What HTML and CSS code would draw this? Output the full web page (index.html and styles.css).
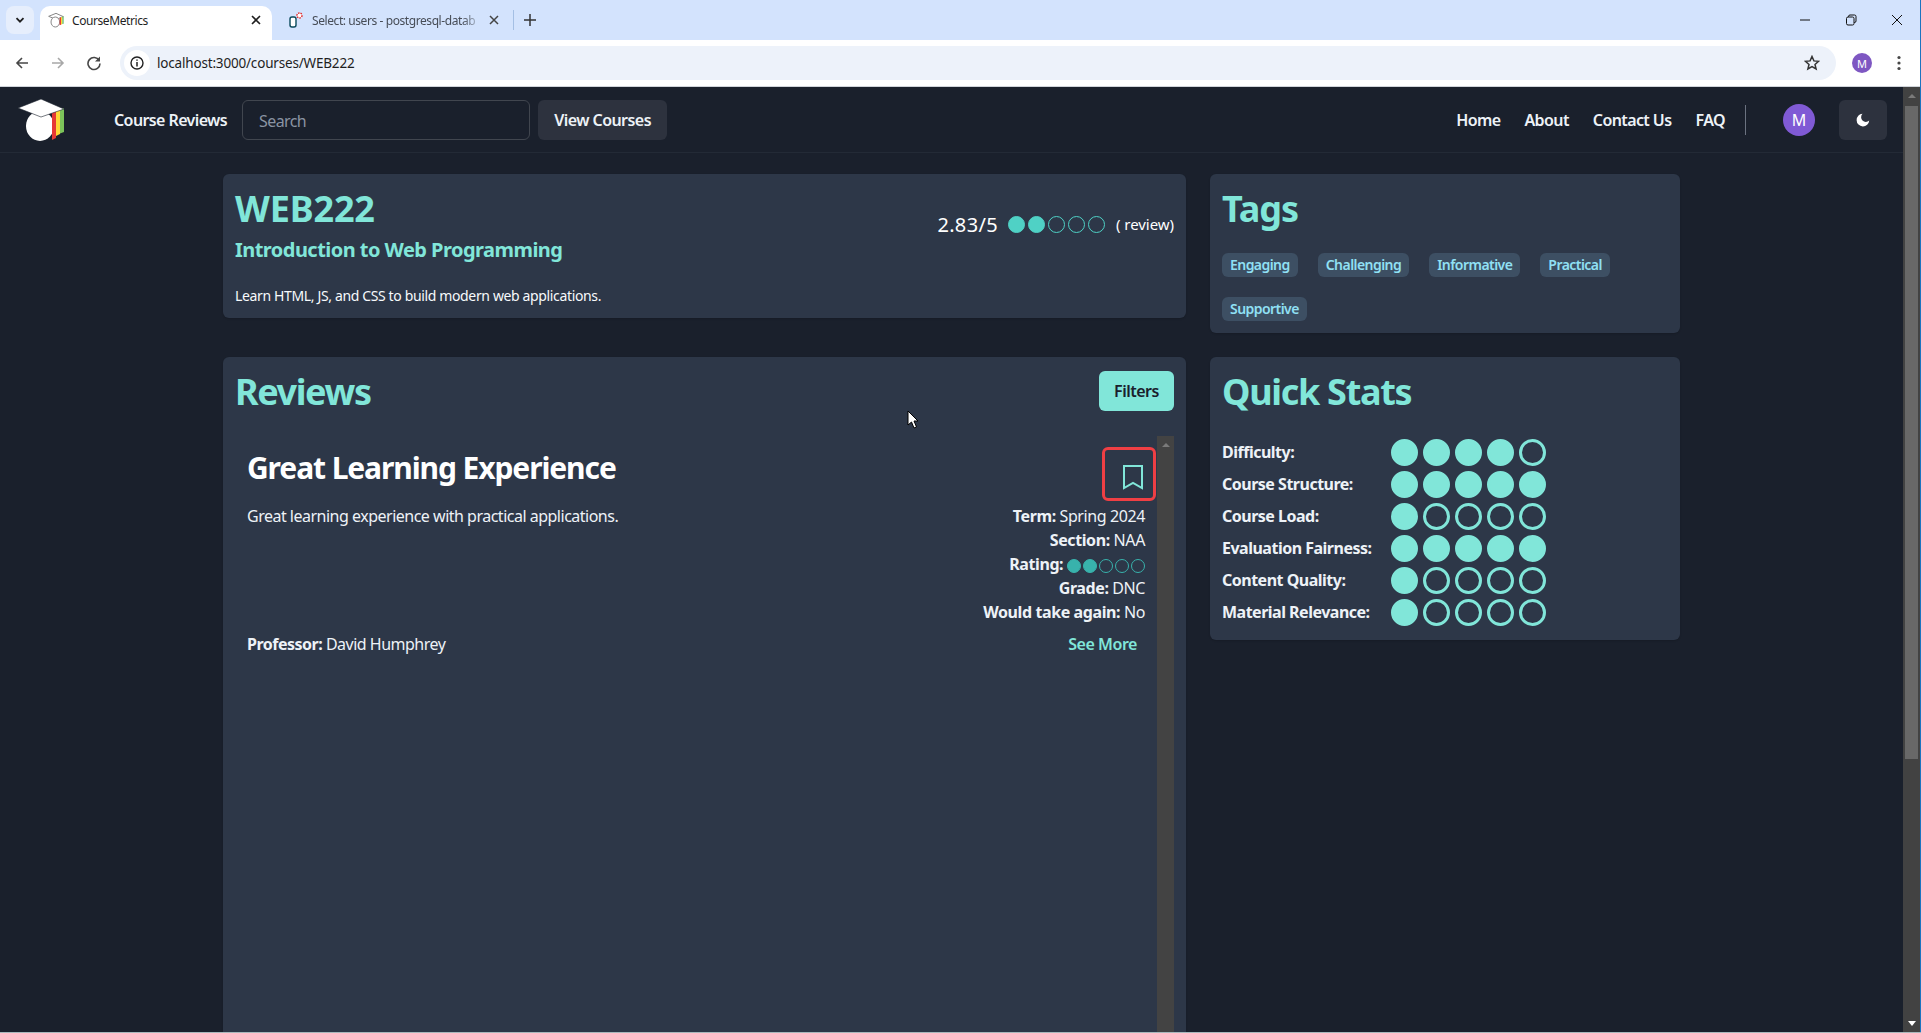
FILE: index.html
```html
<!DOCTYPE html>
<html lang="en">
<head>
<meta charset="utf-8">
<title>CourseMetrics</title>
<link rel="stylesheet" href="styles.css">
</head>
<body>
<div class="window">
  <div class="tabstrip">
    <div class="tabsearch"><svg width="12" height="12" viewBox="0 0 12 12"><path d="M2.5 4.2 6 7.7l3.5-3.5" fill="none" stroke="#1f1f1f" stroke-width="1.8"/></svg></div>
    <div class="tab active">
      <svg class="fav" width="16" height="16" viewBox="0 0 48 44"><path d="M2 11 24 2l22 10-22 8z" fill="#fff" stroke="#888" stroke-width="3"/><ellipse cx="22" cy="28" rx="13" ry="15" fill="#fff" stroke="#888" stroke-width="3"/><path d="M35 16l4-2v22l-4 2z" fill="#e53935"/><path d="M39 14l4-2v22l-4 2z" fill="#fdd835"/><path d="M43 12l4-1v22l-4 1z" fill="#66bb6a"/></svg>
      <span class="tabtitle">CourseMetrics</span>
      <svg class="tabclose" width="10" height="10" viewBox="0 0 10 10"><path d="M1 1l8 8M9 1l-8 8" stroke="#1f1f1f" stroke-width="1.6"/></svg>
    </div>
    <div class="tab inactive">
      <svg class="fav" width="16" height="16" viewBox="0 0 16 16"><rect x="2" y="5" width="6" height="10" rx="2" fill="#fff" stroke="#0b4a5c" stroke-width="1.4"/><circle cx="11.500" cy="3.500" r="2.500" fill="#fff" stroke="#e02020" stroke-width="1.400" stroke-dasharray="1.500 1"/></svg>
      <span class="tabtitle dim">Select: users - postgresql-datab</span>
      <svg class="tabclose" width="10" height="10" viewBox="0 0 10 10"><path d="M1 1l8 8M9 1l-8 8" stroke="#444" stroke-width="1.500"/></svg>
    </div>
    <div class="tabsep"></div>
    <svg class="newtab" width="12" height="12" viewBox="0 0 12 12"><path d="M6 0v12M0 6h12" stroke="#333" stroke-width="1.500"/></svg>
    <div class="winctrls">
      <svg width="12" height="12" viewBox="0 0 12 12"><path d="M1 6h10" stroke="#111" stroke-width="1"/></svg>
      <svg width="12" height="12" viewBox="0 0 12 12"><rect x="1.500" y="3" width="7.500" height="8" rx="1.500" fill="none" stroke="#111"/><path d="M3.500 3V2.500a1.500 1.500 0 0 1 1.500-1.500h4.500a1.500 1.500 0 0 1 1.500 1.500V7a1.500 1.500 0 0 1-1.500 1.500H9" fill="none" stroke="#111"/></svg>
      <svg width="12" height="12" viewBox="0 0 12 12"><path d="M1 1l10 10M11 1 1 11" stroke="#111" stroke-width="1"/></svg>
    </div>
  </div>
  <div class="toolbar">
    <svg class="tool" width="16" height="16" viewBox="0 0 16 16"><path d="M14 8H3M8 3 3 8l5 5" fill="none" stroke="#474747" stroke-width="1.600"/></svg>
    <svg class="tool" width="16" height="16" viewBox="0 0 16 16"><path d="M2 8h11M8 3l5 5-5 5" fill="none" stroke="#a8a8a8" stroke-width="1.600"/></svg>
    <svg class="tool" width="16" height="16" viewBox="0 0 16 16"><path d="M13.200 5.500A6 6 0 1 0 14 8.500" fill="none" stroke="#474747" stroke-width="1.600"/><path d="M14 1.500v5H9z" fill="#474747"/></svg>
    <div class="omnibox">
      <div class="siteinfo"><svg width="16" height="16" viewBox="0 0 16 16"><circle cx="8" cy="8" r="6" fill="none" stroke="#222" stroke-width="1.400"/><path d="M8 7v4.500M8 4.500v1.300" stroke="#222" stroke-width="1.500"/></svg></div>
      <span class="url">localhost:3000/courses/WEB222</span>
      <svg class="star" width="16" height="16" viewBox="0 0 16 16"><path d="M8 1.500l1.900 4.400 4.700.4-3.600 3.100 1.100 4.600L8 11.600 3.900 14l1.100-4.600L1.400 6.300l4.700-.4z" fill="none" stroke="#333" stroke-width="1.500"/></svg>
    </div>
    <div class="chromeavatar">M</div>
    <svg class="kebab" width="4" height="16" viewBox="0 0 4 16"><circle cx="2" cy="2.500" r="1.600" fill="#474747"/><circle cx="2" cy="8" r="1.600" fill="#474747"/><circle cx="2" cy="13.500" r="1.600" fill="#474747"/></svg>
  </div>
  <div class="viewport">
    <div class="page">
      <nav class="navbar">
        <svg class="logo" width="48" height="44" viewBox="0 0 48 44">
          <ellipse cx="22" cy="28" rx="14" ry="15" fill="#fff"/>
          <path d="M34 15l4-2v27l-4 2z" fill="#e53935"/>
          <path d="M38 13l4-2v25l-4 2z" fill="#fdd835"/>
          <path d="M42 11l4-1v24l-4 1.500z" fill="#7cc35a"/>
          <path d="M0 10 23 1l23 10-23 8z" fill="#fff" stroke="#1a202c" stroke-width=".6"/>
        </svg>
        <a class="brand">Course Reviews</a>
        <div class="search">Search</div>
        <div class="btn viewcourses">View Courses</div>
        <div class="navlinks">
          <a class="navlink">Home</a>
          <a class="navlink">About</a>
          <a class="navlink">Contact Us</a>
          <a class="navlink">FAQ</a>
        </div>
        <div class="navdivider"></div>
        <div class="avatar">M</div>
        <div class="btn moon"><svg width="14" height="14" viewBox="0 0 14 14"><path d="M6.500 .8A6.300 6.300 0 1 0 13.200 7.500 4.400 4.400 0 0 1 6.500 .8z" fill="#fff"/></svg></div>
      </nav>
      <main class="content">
        <section class="card header">
          <div class="headertext">
            <h1 class="heading course">WEB222</h1>
            <h2 class="subtitle">Introduction to Web Programming</h2>
            <p class="desc">Learn HTML, JS, and CSS to build modern web applications.</p>
          </div>
          <div class="overall">
            <span class="score">2.83/5</span>
            <span class="dots small"><i class="dot on"></i><i class="dot on"></i><i class="dot"></i><i class="dot"></i><i class="dot"></i></span>
            <span class="count">( review)</span>
          </div>
        </section>
        <section class="card tagscard">
          <h2 class="heading">Tags</h2>
          <div class="tags">
            <span class="tag">Engaging</span>
            <span class="tag">Challenging</span>
            <span class="tag">Informative</span>
            <span class="tag">Practical</span>
            <span class="tag">Supportive</span>
          </div>
        </section>
        <section class="card reviews">
          <div class="reviewshead">
            <h2 class="heading reviewsheading">Reviews</h2>
            <div class="btn filters">Filters</div>
          </div>
          <div class="listwrap">
            <div class="list">
              <article class="review">
                <div class="reviewleft">
                  <h3 class="reviewtitle">Great Learning Experience</h3>
                  <p class="reviewbody">Great learning experience with practical applications.</p>
                  <p class="prof"><b>Professor:</b> David Humphrey</p>
                </div>
                <div class="reviewright">
                  <div class="bookmark"><svg width="22" height="26" viewBox="0 0 22 26"><path d="M2 2h18v22l-9-5-9 5z" fill="none" stroke="#81e6d9" stroke-width="2"/></svg></div>
                  <p class="meta"><b>Term:</b> Spring 2024</p>
                  <p class="meta"><b>Section:</b> NAA</p>
                  <p class="meta"><b>Rating:</b> <span class="dots tiny"><i class="dot on"></i><i class="dot on"></i><i class="dot"></i><i class="dot"></i><i class="dot"></i></span></p>
                  <p class="meta"><b>Grade:</b> DNC</p>
                  <p class="meta"><b>Would take again:</b> No</p>
                  <a class="seemore">See More</a>
                </div>
              </article>
            </div>
            <div class="innerscroll"><span class="arrowup"></span></div>
          </div>
        </section>
        <section class="card stats">
          <h2 class="heading statsheading">Quick Stats</h2>
          <div class="statrows">
            <div class="stat"><b class="statlabel">Difficulty:</b><span class="dots big"><i class="dot on"></i><i class="dot on"></i><i class="dot on"></i><i class="dot on"></i><i class="dot"></i></span></div>
            <div class="stat"><b class="statlabel">Course Structure:</b><span class="dots big"><i class="dot on"></i><i class="dot on"></i><i class="dot on"></i><i class="dot on"></i><i class="dot on"></i></span></div>
            <div class="stat"><b class="statlabel">Course Load:</b><span class="dots big"><i class="dot on"></i><i class="dot"></i><i class="dot"></i><i class="dot"></i><i class="dot"></i></span></div>
            <div class="stat"><b class="statlabel">Evaluation Fairness:</b><span class="dots big"><i class="dot on"></i><i class="dot on"></i><i class="dot on"></i><i class="dot on"></i><i class="dot on"></i></span></div>
            <div class="stat"><b class="statlabel">Content Quality:</b><span class="dots big"><i class="dot on"></i><i class="dot"></i><i class="dot"></i><i class="dot"></i><i class="dot"></i></span></div>
            <div class="stat"><b class="statlabel">Material Relevance:</b><span class="dots big"><i class="dot on"></i><i class="dot"></i><i class="dot"></i><i class="dot"></i><i class="dot"></i></span></div>
          </div>
        </section>
      </main>
      <svg class="cursor" width="12" height="19" viewBox="0 0 12 19"><path d="M1 1v14l3.500-3 2.500 6 2.500-1-2.500-6H11z" fill="#fff" stroke="#000" stroke-width="1"/></svg>
    </div>
    <div class="pagescroll">
      <span class="arrowup light"></span>
      <div class="pagethumb"></div>
      <span class="arrowdown"></span>
    </div>
  </div>
</div>
</body>
</html>
```
FILE: styles.css
```css
* { box-sizing: border-box; }
html, body { margin: 0; height: 100%; overflow: hidden; }
body { background: #a9b8bc; font-family: "Noto Sans", "Open Sans", sans-serif; color: #fff; font-size: 16px; }
h1, h2, h3, p { margin: 0; }

.window { width: 1920px; height: 1032px; display: flex; flex-direction: column; background: #1a202c; box-shadow: 1px 0 0 #1b74c0; }

/* browser chrome */
.tabstrip { height: 40px; background: #d3e3fd; display: flex; align-items: flex-end; color: #1f1f1f; font-size: 12px; letter-spacing: -.42px; position: relative; }
.tabsearch { width: 28px; height: 28px; margin: 0 6px 6px 6px; border-radius: 8px; background: #e6eefc; display: flex; align-items: center; justify-content: center; }
.tab { height: 34px; display: flex; align-items: center; padding-bottom: 6px; }
.tab.active { width: 232px; background: #fff; border-radius: 10px 10px 0 0; padding-left: 8px; padding-right: 11px; }
.tab.inactive { width: 240px; padding-left: 16px; padding-right: 13px; }
.fav { flex: none; margin-right: 8px; }
.tabtitle { flex: 1; white-space: nowrap; overflow: hidden; }
.tabtitle.dim { color: #474d57; -webkit-mask-image: linear-gradient(to right, #000 88%, transparent); mask-image: linear-gradient(to right, #000 88%, transparent); }
.tabclose { flex: none; margin-left: 6px; }
.tabsep { width: 1px; height: 20px; background: #a4bfe4; margin: 0 0 10px 1px; }
.newtab { margin: 0 0 14px 10px; }
.winctrls { margin: 0 17px 14px auto; display: flex; gap: 34px; }

.toolbar { height: 47px; background: #fff; border-bottom: 1px solid #d0d4da; display: flex; align-items: center; padding: 0 0 0 14px; }
.tool { flex: none; margin-right: 20px; }
.omnibox { margin-left: -2px; width: 1716px; height: 34px; background: #edf2fa; border-radius: 17px; display: flex; align-items: center; padding: 0 16px 0 4px; }
.siteinfo { width: 26px; height: 26px; border-radius: 50%; background: #fff; display: flex; align-items: center; justify-content: center; margin-right: 7px; }
.url { font-size: 13.5px; color: #1f1f1f; letter-spacing: -.18px; }
.star { margin-left: auto; }
.chromeavatar { width: 20px; height: 20px; border-radius: 50%; background: #7e57c2; color: #fff; font-size: 11px; display: flex; align-items: center; justify-content: center; margin-left: 16px; }
.kebab { margin-left: 25px; }

/* page frame */
.viewport { flex: 1; min-height: 0; display: flex; }
.page { flex: 1; min-width: 0; overflow: hidden; position: relative; }
.pagescroll { width: 17px; background: #424242; display: flex; flex-direction: column; align-items: center; position: relative; }
.pagethumb { width: 13px; height: 653px; background: #686868; margin-top: 8px; }
.arrowup, .arrowdown { display: block; width: 0; height: 0; border-left: 4px solid transparent; border-right: 4px solid transparent; }
.arrowup { border-bottom: 4px solid #7a7a7a; margin-top: 7px; }
.arrowdown { border-top: 5px solid #fff; position: absolute; bottom: 6px; }

/* navbar */
.navbar { height: 66px; background: #1a202c; border-bottom: 1px solid #232a36; display: flex; align-items: center; padding: 0 16px 0 18px; }
.logo { flex: none; margin-right: 48px; }
.brand, .navlink { font-weight: 600; letter-spacing: -.6px; color: #edf2f7; }
.search { width: 288px; height: 40px; margin-left: 15px; border: 1px solid #41464f; border-radius: 6px; padding: 2px 16px 0; display: flex; align-items: center; color: #8a94a3; letter-spacing: -.6px; }
.btn { display: flex; align-items: center; justify-content: center; border-radius: 6px; height: 40px; background: #2d323e; font-weight: 600; letter-spacing: -.55px; color: #edf2f7; }
.viewcourses { width: 129px; margin-left: 8px; }
.navlinks { margin-left: auto; display: flex; gap: 24px; }
.navdivider { width: 1px; height: 30px; background: #6b7280; margin: 0 37px 0 20px; }
.avatar { width: 32px; height: 32px; border-radius: 50%; background: #805ad5; display: flex; align-items: center; justify-content: center; font-size: 16px; }
.moon { width: 48px; margin-left: 24px; }

/* content grid */
.content { display: grid; grid-template-columns: 963px 470px; column-gap: 24px; row-gap: 24px; padding: 21px 0 0 223px; align-items: start; }
.card { background: #2d3748; border-radius: 6px; box-shadow: 0 1px 2px rgba(0,0,0,.15); }
.heading { font-size: 36px; line-height: 42px; font-weight: 700; color: #81e6d9; letter-spacing: -1.1px; }
.heading.course { letter-spacing: -.15px; }
.heading.reviewsheading { letter-spacing: -1.4px; margin-top: 2px; }
.heading.statsheading { letter-spacing: -1.3px; }

.header { height: 144px; display: flex; justify-content: space-between; padding: 14px 12px 12px; }
.subtitle { font-size: 20px; line-height: 28px; font-weight: 700; color: #81e6d9; letter-spacing: -.54px; margin-top: 6px; }
.desc { font-size: 14px; line-height: 20px; margin-top: 22px; letter-spacing: -.36px; color: #f7fafc; }
.overall { display: flex; align-items: center; height: 22px; margin-top: 25px; }
.score { font-size: 20px; letter-spacing: .35px; margin-right: 10px; }
.count { font-size: 15px; letter-spacing: -.05px; margin-left: 11px; }

.dots { display: inline-flex; vertical-align: middle; }
.dot { display: block; border-radius: 50%; border: 3px solid #81e6d9; }
.dot.on { background: #81e6d9; }
.dots.big { gap: 5px; }
.dots.big .dot { width: 27px; height: 27px; }
.dots.small { gap: 3px; }
.dots.small .dot { width: 17px; height: 17px; border-color: #4fd1c5; border-width: 1px; }
.dots.small .dot.on { background: #4fd1c5; }
.dots.tiny { gap: 2px; }
.dots.tiny .dot { width: 14px; height: 14px; border-color: #38b2ac; border-width: 1.500px; }
.dots.tiny .dot.on { background: #38b2ac; }

.tagscard { height: 159px; padding: 14px 12px 12px; }
.tags { display: flex; flex-wrap: wrap; gap: 20px; margin-top: 23px; }
.tag { height: 24px; padding: 0 8px; border-radius: 6px; background: #3d4f63; color: #90e0f4; font-size: 14px; font-weight: 600; line-height: 24px; letter-spacing: -.55px; }

.reviews { height: 800px; padding: 14px 12px 0; }
.reviewshead { display: flex; justify-content: space-between; align-items: center; height: 40px; }
.filters { width: 75px; background: #81e6d9; color: #1a202c; letter-spacing: -.5px; }
.listwrap { display: flex; margin-top: 25px; height: 700px; }
.list { flex: 1; min-width: 0; }
.innerscroll { width: 17px; background: #434343; display: flex; justify-content: center; }
.review { display: flex; justify-content: space-between; padding: 11px 1px 0 12px; height: 240px; }
.reviewleft { display: flex; flex-direction: column; height: 209px; }
.reviewtitle { font-size: 30px; line-height: 36px; font-weight: 700; margin-top: 3px; letter-spacing: -1.1px; }
.reviewbody { line-height: 24px; margin-top: 18px; letter-spacing: -.5px; color: #edf2f7; }
.prof { line-height: 24px; margin-top: auto; letter-spacing: -.5px; color: #edf2f7; }
.reviewright { display: flex; flex-direction: column; align-items: flex-end; }
.bookmark { width: 54px; height: 54px; border: 3px solid #ef3f44; border-radius: 6px; display: flex; align-items: center; justify-content: center; margin-bottom: 3px; padding: 5px 0 0 7px; }
.meta { line-height: 24px; margin-right: 11px; letter-spacing: -.4px; color: #edf2f7; }
.seemore { line-height: 24px; margin: 8px 19px 0 0; color: #81e6d9; font-weight: 600; letter-spacing: -.45px; }

.stats { height: 283px; padding: 14px 12px 11px; }
.statrows { margin-top: 23px; }
.stat { display: flex; align-items: center; height: 32px; }
.statlabel { width: 168.500px; font-weight: 700; letter-spacing: -.5px; color: #edf2f7; }

.cursor { position: absolute; left: 907px; top: 323px; }
```
